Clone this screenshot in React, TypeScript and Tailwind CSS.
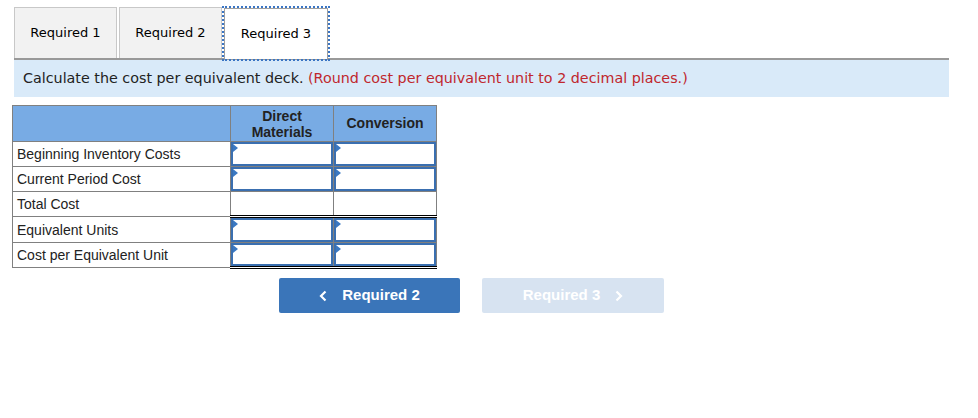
import type { ReactNode } from 'react';

const tabs = ['Required 1', 'Required 2', 'Required 3'];

const rows: { label: string; input: boolean; doubleBottom?: boolean }[] = [
  { label: 'Beginning Inventory Costs', input: true },
  { label: 'Current Period Cost', input: true },
  { label: 'Total Cost', input: false, doubleBottom: true },
  { label: 'Equivalent Units', input: true },
  { label: 'Cost per Equivalent Unit', input: true, doubleBottom: true },
];

function InputCell({ input, doubleBottom }: { input: boolean; doubleBottom?: boolean }) {
  return (
    <td
      className={[
        'p-0 border-x border-[#808080]',
        doubleBottom ? 'border-b-[3px] border-b-black border-double' : 'border-b border-b-[#808080]',
      ].join(' ')}
    >
      {input ? (
        <div
          className={[
            'relative w-full border-2 border-[#3a6fb0] bg-white',
            doubleBottom ? 'h-[23px]' : 'h-[24px]',
          ].join(' ')}
        >
          <span className="absolute left-0 top-0 h-0 w-0 border-y-[4px] border-l-[5px] border-y-transparent border-l-[#3a78c2]" />
        </div>
      ) : (
        <div className={doubleBottom ? 'h-[23px]' : 'h-[24px]'} />
      )}
    </td>
  );
}

function Tab({ children, active }: { children: ReactNode; active?: boolean }) {
  if (active) {
    return (
      <div className="outline-2 outline-dotted outline-[#3a75c4] -mb-[1px] mt-[1px]">
        <div className="flex h-[51px] w-[104px] items-center justify-center border border-b-0 border-[#a0a0a0] bg-white text-[13px] text-black">
          {children}
        </div>
      </div>
    );
  }
  return (
    <div className="flex h-[51px] w-[103px] items-center justify-center border border-b-0 border-[#c8c8c8] bg-[#f2f2f2] text-[13px] text-black">
      {children}
    </div>
  );
}

export default function App() {
  return (
    <div className="h-[418px] w-[978px] bg-white pt-[7px]" style={{ fontFamily: '"DejaVu Sans", Verdana, sans-serif' }}>
      <div className="ml-[14px] flex gap-[2px]">
        {tabs.map((t, i) => (
          <Tab key={t} active={i === 2}>
            {t}
          </Tab>
        ))}
      </div>
      <div className="ml-[14px] w-[935px] border-t-[2px] border-[#999999] bg-[#d9eaf9] px-[9px] pt-[7px] pb-[8px] text-[14.3px] leading-[22px] text-[#222]">
        Calculate the cost per equivalent deck.{' '}
        <span className="text-[#c0272d]">(Round cost per equivalent unit to 2 decimal places.)</span>
      </div>

      <table
        className="ml-[12px] mt-[8px] border-collapse text-[14px] text-[#222]"
        style={{ fontFamily: '"Liberation Sans", Arial, sans-serif' }}
      >
        <thead>
          <tr className="h-[36px] bg-[#78abe4]">
            <th className="w-[218px] border border-[#808080] p-0" />
            <th className="w-[103px] border border-[#808080] p-0 text-[14px] font-bold leading-[16px]">
              Direct
              <br />
              Materials
            </th>
            <th className="w-[103px] border border-[#808080] p-0 text-[14px] font-bold">Conversion</th>
          </tr>
        </thead>
        <tbody>
          {rows.map((r) => (
            <tr key={r.label}>
              <td className="border border-[#808080] px-[4px] py-0 leading-[20px]">{r.label}</td>
              <InputCell input={r.input} doubleBottom={r.doubleBottom} />
              <InputCell input={r.input} doubleBottom={r.doubleBottom} />
            </tr>
          ))}
        </tbody>
      </table>

      <div className="mt-[9px] flex gap-[22px] pl-[279px]" style={{ fontFamily: '"Liberation Sans", Arial, sans-serif' }}>
        <button className="flex h-[35px] w-[181px] items-center justify-center gap-[15px] rounded-[2px] bg-[#3a75b9] text-[15px] font-bold text-white">
          <svg width="8" height="12" viewBox="0 0 8 12" fill="none">
            <path d="M6.5 1.5 2 6l4.5 4.5" stroke="white" strokeWidth="2.2" />
          </svg>
          Required 2
        </button>
        <button className="flex h-[35px] w-[182px] items-center justify-center gap-[15px] rounded-[2px] bg-[#d7e3f1] text-[15px] font-bold text-white">
          Required 3
          <svg width="8" height="12" viewBox="0 0 8 12" fill="none">
            <path d="M1.5 1.5 6 6l-4.5 4.5" stroke="white" strokeWidth="2.2" />
          </svg>
        </button>
      </div>
    </div>
  );
}
